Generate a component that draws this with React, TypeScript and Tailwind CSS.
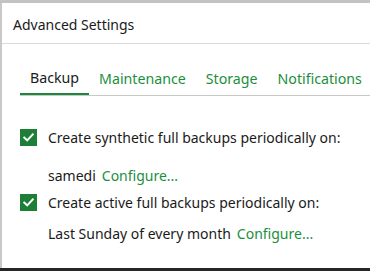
import React from 'react';

const tabs = ['Backup', 'Maintenance', 'Storage', 'Notifications'];

function CheckBox() {
  return (
    <div className="w-[17px] h-[17px] bg-[#1d7f37] flex items-center justify-center shrink-0">
      <svg width="11" height="9" viewBox="0 0 11 9" fill="none">
        <path d="M1.2 4.6 L4.2 7.4 L9.8 1.4" stroke="white" strokeWidth="2" strokeLinecap="square" />
      </svg>
    </div>
  );
}

export default function App() {
  return (
    <div className="w-[370px] h-[271px] bg-white flex flex-col overflow-hidden text-[#1a1a1a]" style={{ fontFamily: '"Noto Sans", "Open Sans", sans-serif' }}>
      <div className="h-[3px] bg-[#c3c3c3] shrink-0" />
      <div className="flex-1 border-l-2 border-[#c9c9c9] flex flex-col">
        {/* Title */}
        <div className="h-[41px] pt-[3px] px-[11px] flex items-center border-b border-[#dadada] text-[14px]">
          Advanced Settings
        </div>
        {/* Tabs */}
        <div className="mt-[19px] ml-[18px] flex border-b border-[#c8c8c8] text-[14.2px]">
          {tabs.map((t, i) => (
            <div
              key={t}
              className={
                i === 0
                  ? 'h-[32px] px-[10px] flex items-center -mb-px border-b-2 border-[#1d8a3b] text-[#1a1a1a]'
                  : 'h-[32px] px-[10px] flex items-center text-[#1a8f3c]'
              }
            >
              {t}
            </div>
          ))}
        </div>
        {/* Options */}
        <div className="pl-[18px] text-[14px]">
          <div className="mt-[31px] h-[20px] flex items-center gap-[11px]">
            <CheckBox />
            <span>Create synthetic full backups periodically on:</span>
          </div>
          <div className="mt-[18px] h-[20px] pl-[28px] flex items-center gap-[6px]">
            <span>samedi</span>
            <span className="text-[#1a8f3c]">Configure...</span>
          </div>
          <div className="mt-[7px] h-[20px] flex items-center gap-[11px]">
            <CheckBox />
            <span>Create active full backups periodically on:</span>
          </div>
          <div className="mt-[11px] h-[20px] pl-[28px] flex items-center gap-[6px]">
            <span>Last Sunday of every month</span>
            <span className="text-[#1a8f3c]">Configure...</span>
          </div>
        </div>
      </div>
      <div className="h-[3px] bg-[#262626] shrink-0" />
    </div>
  );
}
